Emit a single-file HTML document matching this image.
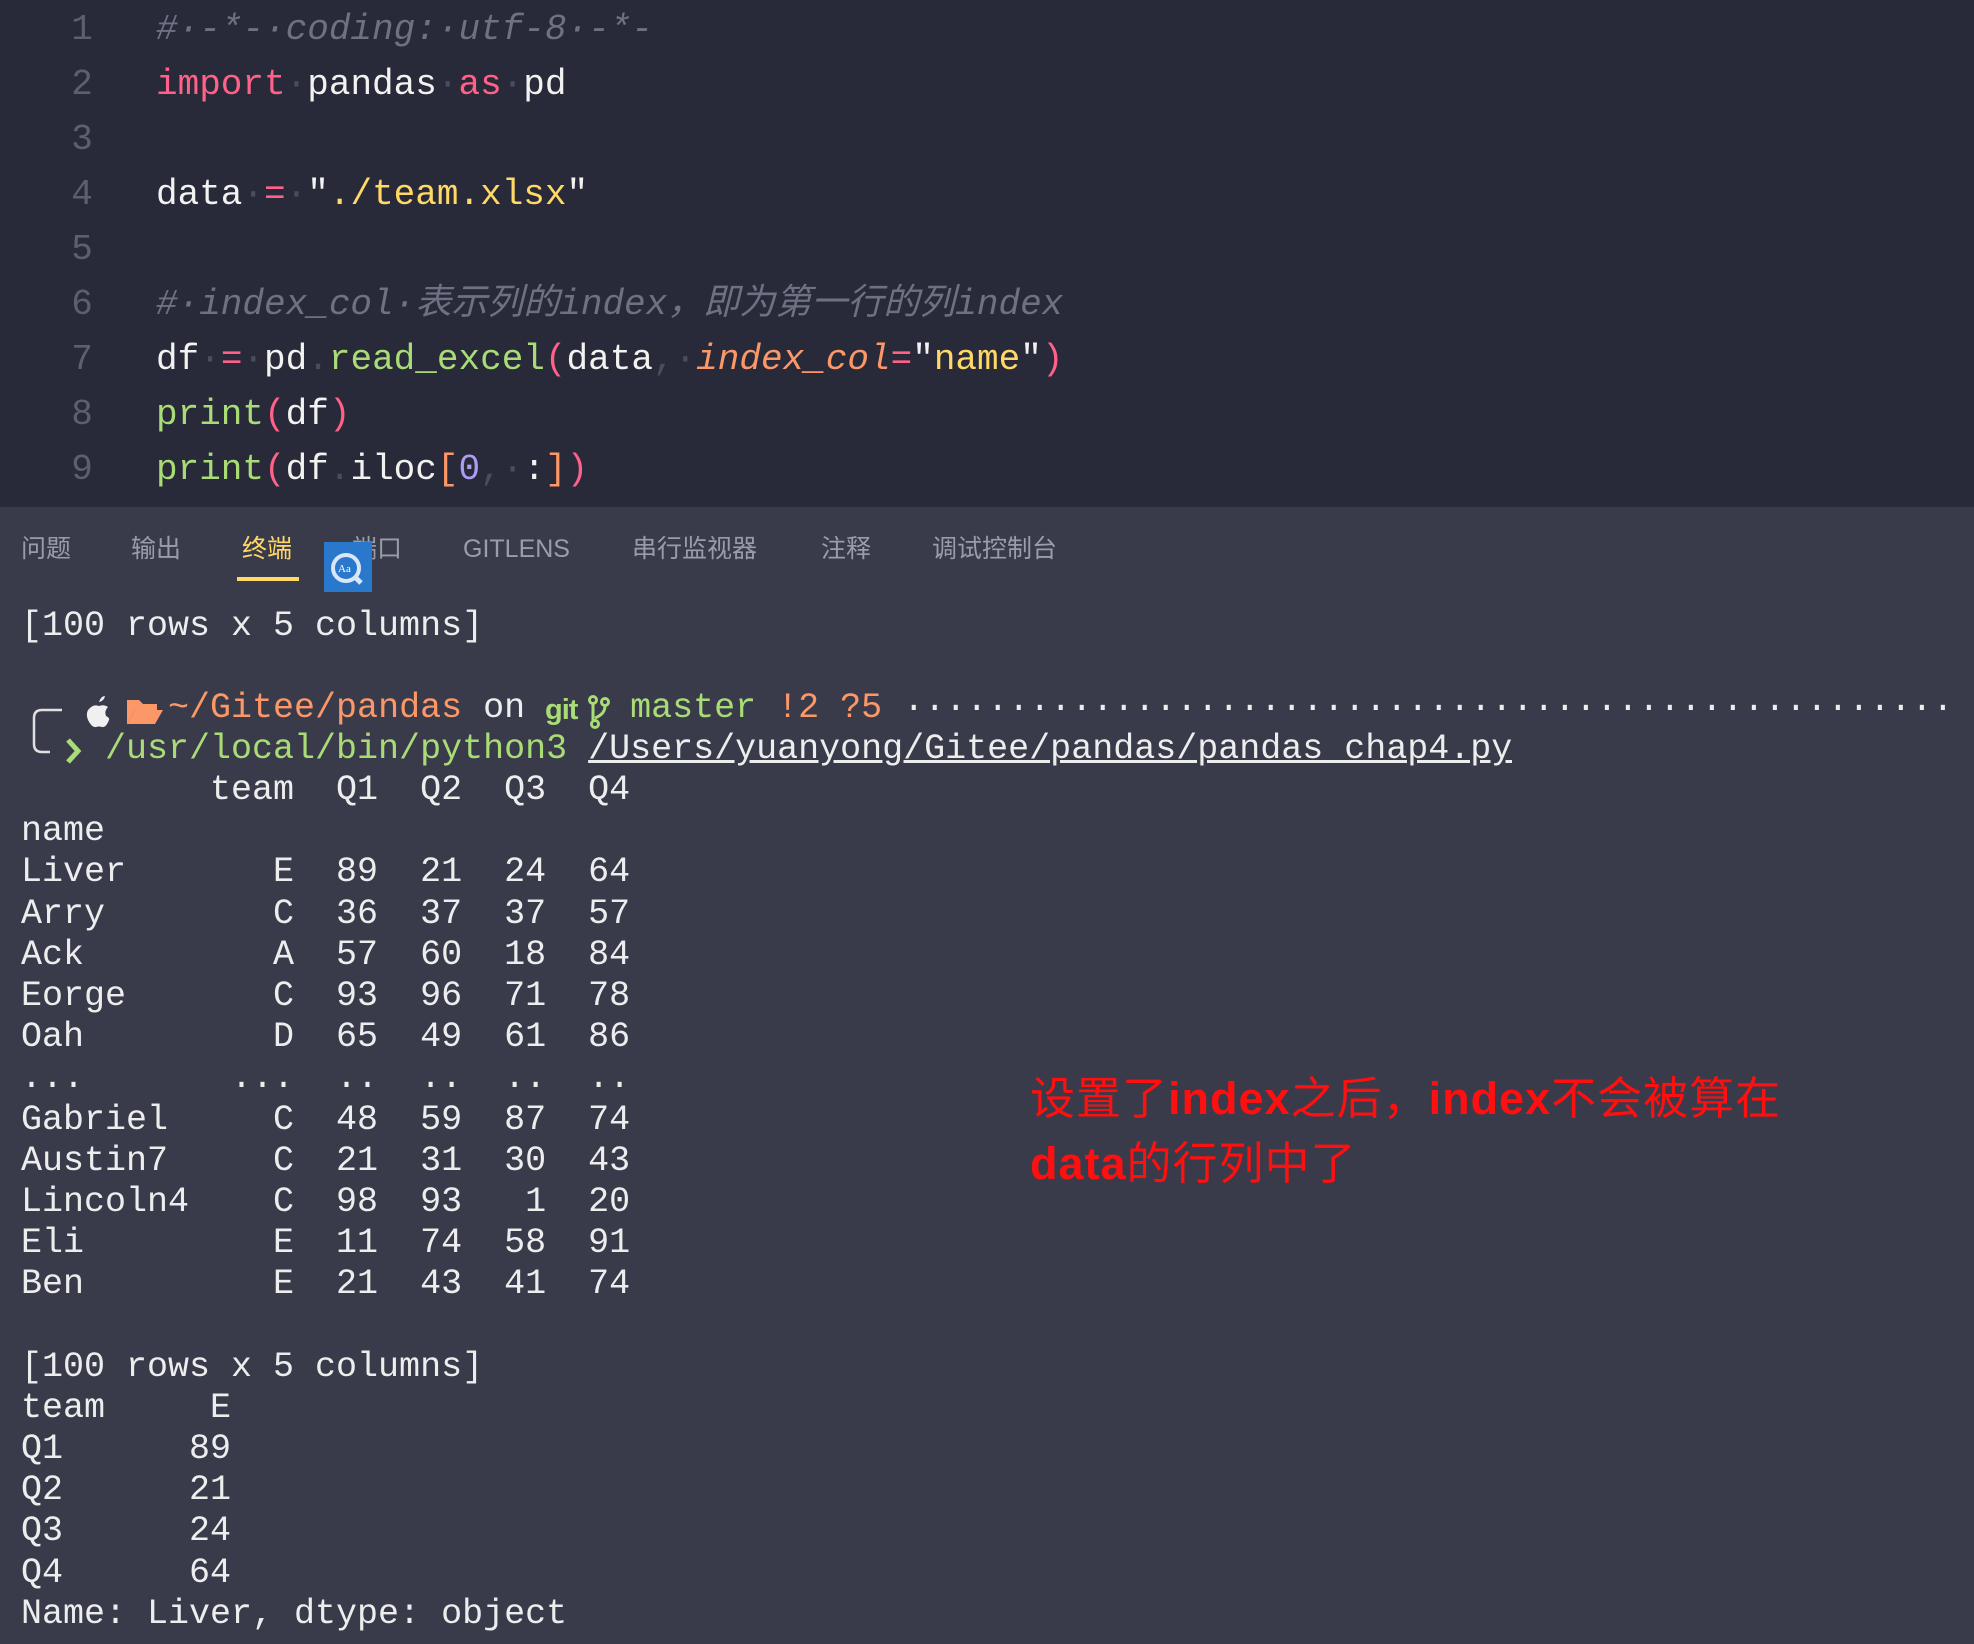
<!DOCTYPE html>
<html><head><meta charset="utf-8"><style>
*{margin:0;padding:0;box-sizing:border-box}
body{width:1974px;height:1644px;overflow:hidden;background:#393b4a;position:relative;font-family:"Liberation Mono","Noto Sans CJK SC",monospace}
#ed{position:absolute;left:0;top:0;width:1974px;height:507px;background:#282a39}
.cl{position:absolute;left:156px;top:2px;height:55px;line-height:55px;font-size:36px;white-space:pre;color:#f2f2f0}
.ln{position:absolute;left:60px;width:44px;text-align:center;height:55px;line-height:55px;font-size:36px;color:#5c5f70}
.c{color:#6e7182;font-style:italic}.k{color:#ff6188}.s{color:#ffd866}.f{color:#a9dc76}.p{color:#fc9867;font-style:italic}.n{color:#ab9df2}.w{color:#4a4d5e}.o{color:#fc9867}
.tab{position:absolute;top:532px;font-family:"Liberation Sans","Noto Sans CJK SC",sans-serif;font-size:25px;line-height:34px;color:#9a9da9}
.t{position:absolute;left:21px;height:41.17px;line-height:41.17px;font-size:35px;color:#eceeee;white-space:pre;overflow:hidden;max-width:1953px}
.g{color:#a9dc76}.or{color:#fc9867}
#note{position:absolute;left:1030px;top:1066px;font-family:"Liberation Sans","Noto Sans CJK SC",sans-serif;font-size:45px;line-height:65px;color:#ff0f0f;letter-spacing:1px}
#note b{font-weight:bold}
</style></head><body>
<div id="ed">
<div class="ln" style="top:2px">1</div><div class="ln" style="top:57px">2</div><div class="ln" style="top:112px">3</div><div class="ln" style="top:167px">4</div><div class="ln" style="top:222px">5</div><div class="ln" style="top:277px">6</div><div class="ln" style="top:332px">7</div><div class="ln" style="top:387px">8</div><div class="ln" style="top:442px">9</div>
<div class="cl" style="top:2px"><span class="c">#·-*-·coding:·utf-8·-*-</span></div>
<div class="cl" style="top:57px"><span class="k">import</span><span class="w">·</span>pandas<span class="w">·</span><span class="k">as</span><span class="w">·</span>pd</div>
<div class="cl" style="top:167px">data<span class="w">·</span><span class="k">=</span><span class="w">·</span>"<span class="s">./team.xlsx</span>"</div>
<div class="cl" style="top:277px"><span class="c">#·index_col·表示列的index，即为第一行的列index</span></div>
<div class="cl" style="top:332px">df<span class="w">·</span><span class="k">=</span><span class="w">·</span>pd<span class="w">.</span><span class="f">read_excel</span><span class="k">(</span>data<span class="w">,·</span><span class="p">index_col</span><span class="k">=</span>"<span class="s">name</span>"<span class="k">)</span></div>
<div class="cl" style="top:387px"><span class="f">print</span><span class="k">(</span>df<span class="k">)</span></div>
<div class="cl" style="top:442px"><span class="f">print</span><span class="k">(</span>df<span class="w">.</span>iloc<span class="o">[</span><span class="n">0</span><span class="w">,·</span>:<span class="o">]</span><span class="k">)</span></div>
</div>
<div class="tab" style="left:21px">问题</div>
<div class="tab" style="left:131px">输出</div>
<div class="tab" style="left:242px;color:#ffd866">终端</div>
<div style="position:absolute;left:237px;top:577px;width:62px;height:4px;background:#ffd866"></div>
<div class="tab" style="left:352px">端口</div>
<div class="tab" style="left:463px">GITLENS</div>
<div class="tab" style="left:632px">串行监视器</div>
<div class="tab" style="left:821px">注释</div>
<div class="tab" style="left:932px">调试控制台</div>
<div style="position:absolute;left:324px;top:542px;width:48px;height:50px;background:#2978cc">
<svg width="48" height="50"><circle cx="22" cy="26" r="13" fill="none" stroke="#d8e6f5" stroke-width="4"/><line x1="31" y1="35" x2="37" y2="41" stroke="#d8e6f5" stroke-width="5"/><text x="14" y="30" font-size="11" fill="#fff" font-family="Liberation Serif">Aa</text></svg></div>

<div class="t" style="top:606px">[100 rows x 5 columns]</div>
<svg style="position:absolute;left:28px;top:700px" width="60" height="60"><path d="M34 10 H14 Q6 10 6 18 V44 Q6 52 14 52 H22" fill="none" stroke="#e0e0e0" stroke-width="2.5"/></svg>
<div class="t" style="top:688px">       <span class="or">~/Gitee/pandas</span> on     <span class="g">master</span> <span class="or">!2 ?5</span> ··················································</div>
<div style="position:absolute;left:545px;top:690px;font-family:'Liberation Sans',sans-serif;font-weight:bold;font-size:29px;line-height:41px;color:#a9dc76;letter-spacing:-1px">git</div>
<svg style="position:absolute;left:587px;top:694px" width="24" height="36"><g fill="none" stroke="#a9dc76" stroke-width="3"><circle cx="6" cy="6" r="3.5"/><circle cx="18" cy="8" r="3.5"/><circle cx="8" cy="30" r="3.5"/><path d="M6 10 V26 M18 12 Q18 20 8 24"/></g></svg>
<svg style="position:absolute;left:82px;top:694px" width="34" height="36"><path d="M17 8 Q19 2 23 2 Q22 7 17 8Z M8 14 Q12 10 17 12 Q22 10 26 13 Q22 17 24 22 Q28 24 27 26 Q24 34 20 33 Q17 32 14 33 Q10 34 6 26 Q3 18 8 14Z" fill="#f0f0f0"/></svg>
<svg style="position:absolute;left:125px;top:696px" width="40" height="32"><path d="M2 4 H14 L18 8 H32 V14 H10 L2 28Z" fill="#fc9867"/><path d="M10 14 H38 L30 28 H2Z" fill="#fc9867"/></svg>
<svg style="position:absolute;left:64px;top:736px" width="20" height="30"><path d="M4 4 L14 15 L4 26" fill="none" stroke="#a9dc76" stroke-width="5"/></svg>
<div class="t" style="top:729px"><span class="g">    /usr/local/bin/python3</span> <span style="text-decoration:underline">/Users/yuanyong/Gitee/pandas/pandas_chap4.py</span></div>
<div class="t" style="top:770px">         team  Q1  Q2  Q3  Q4</div>
<div class="t" style="top:811px">name</div>
<div class="t" style="top:852px">Liver       E  89  21  24  64</div>
<div class="t" style="top:894px">Arry        C  36  37  37  57</div>
<div class="t" style="top:935px">Ack         A  57  60  18  84</div>
<div class="t" style="top:976px">Eorge       C  93  96  71  78</div>
<div class="t" style="top:1017px">Oah         D  65  49  61  86</div>
<div class="t" style="top:1058px">...       ...  ..  ..  ..  ..</div>
<div class="t" style="top:1100px">Gabriel     C  48  59  87  74</div>
<div class="t" style="top:1141px">Austin7     C  21  31  30  43</div>
<div class="t" style="top:1182px">Lincoln4    C  98  93   1  20</div>
<div class="t" style="top:1223px">Eli         E  11  74  58  91</div>
<div class="t" style="top:1264px">Ben         E  21  43  41  74</div>
<div class="t" style="top:1347px">[100 rows x 5 columns]</div>
<div class="t" style="top:1388px">team     E</div>
<div class="t" style="top:1429px">Q1      89</div>
<div class="t" style="top:1470px">Q2      21</div>
<div class="t" style="top:1511px">Q3      24</div>
<div class="t" style="top:1553px">Q4      64</div>
<div class="t" style="top:1594px">Name: Liver, dtype: object</div>
<div id="note">设置了<b>index</b>之后，<b>index</b>不会被算在<br><b>data</b>的行列中了</div>
</body></html>
